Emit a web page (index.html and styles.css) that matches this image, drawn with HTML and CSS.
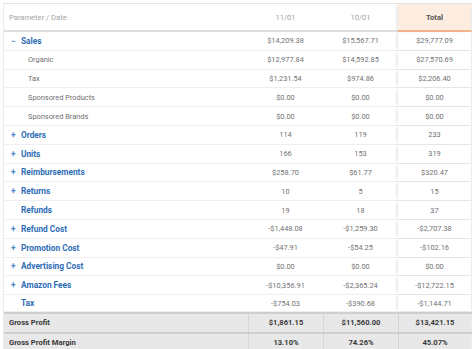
FILE: index.html
```html
<!DOCTYPE html>
<html>
<head>
<meta charset="utf-8">
<link rel="stylesheet" href="styles.css">
</head>
<body>
<div class="tbl">
  <div class="row head">
    <div class="c first">Parameter / Date</div>
    <div class="c">11/01</div>
    <div class="c">10/01</div>
    <div class="c total">Total</div>
  </div>
  <div class="row grp"><div class="c first"><span class="tg">−</span>Sales</div><div class="c">$14,209.38</div><div class="c">$15,567.71</div><div class="c total">$29,777.09</div></div>
  <div class="row sub"><div class="c first">Organic</div><div class="c">$12,977.84</div><div class="c">$14,592.85</div><div class="c total">$27,570.69</div></div>
  <div class="row sub"><div class="c first">Tax</div><div class="c">$1,231.54</div><div class="c">$974.86</div><div class="c total">$2,206.40</div></div>
  <div class="row sub"><div class="c first">Sponsored Products</div><div class="c">$0.00</div><div class="c">$0.00</div><div class="c total">$0.00</div></div>
  <div class="row sub"><div class="c first">Sponsored Brands</div><div class="c">$0.00</div><div class="c">$0.00</div><div class="c total">$0.00</div></div>
  <div class="row grp"><div class="c first"><span class="tg">+</span>Orders</div><div class="c">114</div><div class="c">119</div><div class="c total">233</div></div>
  <div class="row grp"><div class="c first"><span class="tg">+</span>Units</div><div class="c">166</div><div class="c">153</div><div class="c total">319</div></div>
  <div class="row grp"><div class="c first"><span class="tg">+</span>Reimbursements</div><div class="c">$258.70</div><div class="c">$61.77</div><div class="c total">$320.47</div></div>
  <div class="row grp"><div class="c first"><span class="tg">+</span>Returns</div><div class="c">10</div><div class="c">5</div><div class="c total">15</div></div>
  <div class="row grp"><div class="c first"><span class="tg"></span>Refunds</div><div class="c">19</div><div class="c">18</div><div class="c total">37</div></div>
  <div class="row grp"><div class="c first"><span class="tg">+</span>Refund Cost</div><div class="c">-$1,448.08</div><div class="c">-$1,259.30</div><div class="c total">-$2,707.38</div></div>
  <div class="row grp"><div class="c first"><span class="tg">+</span>Promotion Cost</div><div class="c">-$47.91</div><div class="c">-$54.25</div><div class="c total">-$102.16</div></div>
  <div class="row grp"><div class="c first"><span class="tg">+</span>Advertising Cost</div><div class="c">$0.00</div><div class="c">$0.00</div><div class="c total">$0.00</div></div>
  <div class="row grp"><div class="c first"><span class="tg">+</span>Amazon Fees</div><div class="c">-$10,356.91</div><div class="c">-$2,365.24</div><div class="c total">-$12,722.15</div></div>
  <div class="row grp short"><div class="c first"><span class="tg"></span>Tax</div><div class="c">-$754.03</div><div class="c">-$390.68</div><div class="c total">-$1,144.71</div></div>
  <div class="row sum"><div class="c first">Gross Profit</div><div class="c">$1,861.15</div><div class="c">$11,560.00</div><div class="c total">$13,421.15</div></div>
  <div class="row sum"><div class="c first">Gross Profit Margin</div><div class="c">13.10%</div><div class="c">74.26%</div><div class="c total">45.07%</div></div>
</div>
</body>
</html>
```
FILE: styles.css
```css
html, body { margin: 0; padding: 0; background: #fff; }
body { font-family: Roboto, "Liberation Sans", sans-serif; overflow: hidden; }
.tbl {
  margin: 3px 0 0 3px;
  width: 468px;
  border-top: 1px solid #e6e6e6;
  border-left: 1px solid #ececec;
}
.row {
  display: grid;
  grid-template-columns: 244px 75px 75px 74px;
  height: 18.8px;
  box-sizing: border-box;
  border-bottom: 1px solid #efefef;
}
.c {
  display: flex;
  align-items: center;
  justify-content: center;
  font-size: 7.4px;
  color: #727272;
  white-space: nowrap;
}
.c.first { justify-content: flex-start; padding-left: 8px; }
.c.total {
  box-shadow: -2px 0 3px -1px rgba(0,0,0,0.13);
  border-right: 1px solid #ececec;
}
.head { height: 28px; border-bottom: 2px solid #dedede; }
.head .c { color: #a3a3a3; font-size: 7.6px; }
.head .c.first { padding-left: 5px; }
.head .c.total {
  background: #fdede0;
  color: #555;
  font-weight: 700;
  border-bottom: 2px solid #f2b78a;
  margin-bottom: -2px;
}
.grp .c.first { color: #2d6db5; font-weight: 700; font-size: 8.3px; padding-left: 7px; }
.tg { display: inline-block; width: 10px; font-weight: 700; color: #4a86c8; }
.sub .c.first { padding-left: 24px; color: #707070; }
.short { height: 17px; }
.sum {
  background: #e8e8e8;
  border-top: 2px solid #cfcfcf;
  border-bottom: 0;
  height: 19.5px;
}
.sum .c { color: #383838; font-weight: 700; font-size: 7.6px; border-left: 1px solid #d8d8d8; }
.sum .c.first { border-left: 0; padding-left: 5px; }
.sum .c.total { box-shadow: none; border-left: 1px solid #d4d4d4; }
```
